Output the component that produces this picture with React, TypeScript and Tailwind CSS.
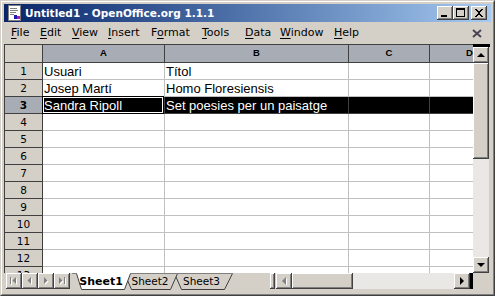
import React from "react";

const raised =
  "shadow-[inset_-1px_-1px_0_#404040,inset_1px_1px_0_#ffffff,inset_-2px_-2px_0_#808080]";

type Dir = "up" | "down" | "left" | "right";

function Tri({ dir, color = "#000000", shadow = false }: { dir: Dir; color?: string; shadow?: boolean }) {
  const pts: Record<Dir, string> = {
    up: "4,2 0,6 8,6",
    down: "0,2 8,2 4,6",
    left: "6,0 6,8 2,4",
    right: "2,0 2,8 6,4",
  };
  return (
    <svg width="8" height="8" viewBox="0 0 8 8" className="block">
      {shadow && <polygon points={pts[dir]} fill="#ffffff" transform="translate(1,1)" />}
      <polygon points={pts[dir]} fill={color} />
    </svg>
  );
}

function ScrollBtn({ dir, disabled = false }: { dir: Dir; disabled?: boolean }) {
  return (
    <div className={`w-[16px] h-[16px] shrink-0 bg-[#d4d0c8] ${raised} flex items-center justify-center`}>
      <Tri dir={dir} color={disabled ? "#808080" : "#000000"} shadow={disabled} />
    </div>
  );
}

function NavGlyph({ kind, fill }: { kind: "first" | "prev" | "next" | "last"; fill: string }) {
  return (
    <g fill={fill}>
      {kind === "first" && (
        <>
          <rect x="1" y="1" width="1" height="7" />
          <polygon points="7,1 7,8 3.5,4.5" />
        </>
      )}
      {kind === "prev" && <polygon points="6,1 6,8 2.5,4.5" />}
      {kind === "next" && <polygon points="3,1 3,8 6.5,4.5" />}
      {kind === "last" && (
        <>
          <polygon points="2,1 2,8 5.5,4.5" />
          <rect x="7" y="1" width="1" height="7" />
        </>
      )}
    </g>
  );
}

function NavBtn({ kind }: { kind: "first" | "prev" | "next" | "last" }) {
  return (
    <div className={`w-[16px] h-[16px] shrink-0 bg-[#d4d0c8] ${raised} flex items-center justify-center`}>
      <svg width="10" height="10" viewBox="0 0 10 10" className="block">
        <g transform="translate(1,1)">
          <NavGlyph kind={kind} fill="#ffffff" />
        </g>
        <NavGlyph kind={kind} fill="#808080" />
      </svg>
    </div>
  );
}

function TitleBtn({ kind }: { kind: "min" | "max" | "close" }) {
  return (
    <div className={`w-[16px] h-[14px] shrink-0 bg-[#d4d0c8] ${raised} flex`}>
      <svg width="16" height="14" viewBox="0 0 16 14" className="block" shapeRendering="crispEdges">
        {kind === "min" && <rect x="4" y="9" width="6" height="2" fill="#000" />}
        {kind === "max" && (
          <>
            <rect x="3.5" y="2.5" width="8" height="8" fill="none" stroke="#000" />
            <rect x="3" y="2" width="9" height="2" fill="#000" />
          </>
        )}
        {kind === "close" && (
          <g fill="#000">
            <polygon points="4,3 6,3 8,5.5 10,3 12,3 9,7 12,11 10,11 8,8.5 6,11 4,11 7,7" />
          </g>
        )}
      </svg>
    </div>
  );
}

const menus: { pre: string; u: string; post: string; w: string }[] = [
  { pre: "", u: "F", post: "ile", w: "w-[29px]" },
  { pre: "", u: "E", post: "dit", w: "w-[32px]" },
  { pre: "", u: "V", post: "iew", w: "w-[36px]" },
  { pre: "", u: "I", post: "nsert", w: "w-[43px]" },
  { pre: "F", u: "o", post: "rmat", w: "w-[51px]" },
  { pre: "", u: "T", post: "ools", w: "w-[43px]" },
  { pre: "", u: "D", post: "ata", w: "w-[35px]" },
  { pre: "", u: "W", post: "indow", w: "w-[54px]" },
  { pre: "", u: "H", post: "elp", w: "w-[30px]" },
];

const cols = [
  { l: "A", w: "w-[122px]" },
  { l: "B", w: "w-[184px]" },
  { l: "C", w: "w-[81px]" },
  { l: "D", w: "w-[80px]" },
];

const data: Record<number, string[]> = {
  1: ["Usuari", "Títol"],
  2: ["Josep Martí", "Homo Floresiensis"],
  3: ["Sandra Ripoll", "Set poesies per un paisatge"],
};

function Row({ n }: { n: number }) {
  const sel = n === 3;
  const vals = data[n] || [];
  return (
    <div className="flex h-[17px] shrink-0">
      <div
        className={`w-[38px] shrink-0 border-r border-b border-[#404040] flex items-center justify-center text-[10.5px] leading-none text-black ${
          sel ? "bg-[#a8acb4] font-bold" : "bg-[#d4d0c8]"
        }`}
      >
        {n}
      </div>
      {cols.map((c, i) => (
        <div
          key={c.l}
          className={`${c.w} shrink-0 relative border-r border-b pl-[1px] whitespace-nowrap text-[13px] leading-[18px] font-['Liberation_Sans',Arial,sans-serif] ${
            sel ? "bg-black text-white border-[#3f3f3f]" : "bg-white text-black border-[#c0c0c0]"
          }`}
        >
          {vals[i] || ""}
          {sel && i === 0 && (
            <div className="absolute left-[-1px] right-0 top-[-1px] bottom-[-1px] border border-black z-10">
              <div className="absolute inset-0 border border-white" />
            </div>
          )}
        </div>
      ))}
      <div className="flex-1 bg-white border-b border-[#c0c0c0]" />
    </div>
  );
}

function Tabs() {
  return (
    <div className="relative w-[161px] h-[17px] shrink-0 ml-[2px]">
      <svg width="161" height="17" viewBox="0 0 161 17" className="absolute inset-0 block">
        <polygon points="102.5,0.5 109.5,16.5 152.5,16.5 160.5,0.5" fill="#d4d0c8" stroke="#404040" />
        <polygon points="52.5,0.5 59.5,16.5 98.5,16.5 105.5,0.5" fill="#d4d0c8" stroke="#404040" />
        <polygon points="4.5,0.5 9.5,16.5 52.5,16.5 58.5,0.5" fill="#ffffff" stroke="#404040" />
        <line x1="0" y1="0.5" x2="161" y2="0.5" stroke="#808080" />
        <line x1="5" y1="0.5" x2="58" y2="0.5" stroke="#ffffff" />
      </svg>
      <div className="relative flex h-[17px] items-center text-black font-['DejaVu_Sans',sans-serif]">
        <div className="w-[58px] text-center text-[11px] font-bold leading-[17px]">Sheet1</div>
        <div className="w-[40px] text-center text-[10.5px] leading-[17px]">Sheet2</div>
        <div className="w-[63px] text-center text-[10.5px] leading-[17px]">Sheet3</div>
      </div>
    </div>
  );
}

export default function App() {
  return (
    <div className="w-[495px] h-[296px] overflow-hidden bg-[#d4d0c8] border border-t-[#d4d0c8] border-l-[#d4d0c8] border-r-[#404040] border-b-[#404040] font-['DejaVu_Sans',sans-serif]">
      <div className="w-full h-full border border-t-white border-l-white border-r-[#808080] border-b-[#808080] p-[2px] flex flex-col">
        {/* Title bar */}
        <div className="h-[18px] shrink-0 flex items-center bg-gradient-to-r from-[#0a246a] to-[#a6caf0]">
          <svg width="16" height="16" viewBox="0 0 16 16" className="block ml-[3px] shrink-0" shapeRendering="crispEdges">
            <rect x="1.5" y="0.5" width="12" height="15" fill="#ffffff" stroke="#808080" />
            <rect x="3" y="3" width="7" height="1" fill="#808080" />
            <rect x="3" y="5" width="8" height="1" fill="#808080" />
            <rect x="3" y="7" width="6" height="1" fill="#808080" />
            <rect x="3" y="9" width="4" height="1" fill="#808080" />
            <rect x="7" y="10" width="3" height="4" fill="#1c1cb4" />
            <rect x="10" y="11" width="3" height="3" fill="#b01cb0" />
          </svg>
          <div className="ml-[2px] text-white font-bold text-[10.5px] leading-none whitespace-nowrap">
            Untitled1 - OpenOffice.org 1.1.1
          </div>
          <div className="flex-1" />
          <TitleBtn kind="min" />
          <TitleBtn kind="max" />
          <div className="w-[2px]" />
          <TitleBtn kind="close" />
          <div className="w-[4px]" />
        </div>

        {/* Menu bar */}
        <div className="h-[22px] shrink-0 flex items-center pl-[7px] text-[11px] text-black">
          {menus.map((m) => (
            <div key={m.u + m.post} className={`${m.w} shrink-0 whitespace-nowrap`}>
              {m.pre}
              <span className="underline underline-offset-[2px]">{m.u}</span>
              {m.post}
            </div>
          ))}
          <div className="flex-1" />
          <svg width="10" height="9" viewBox="0 0 10 9" className="block mr-[9px] mt-[1px]">
            <path d="M1 1 L9 8 M9 1 L1 8" stroke="#4c4454" strokeWidth="2" />
          </svg>
        </div>

        {/* Document area */}
        <div className="h-[229px] shrink-0 flex">
          <div className="flex-1 min-w-0 overflow-hidden border-l border-t border-[#404040] bg-white flex flex-col">
            <div className="flex h-[18px] shrink-0 border-b border-[#404040]">
              <div className="w-[38px] shrink-0 bg-[#d4d0c8] border-r border-[#404040]" />
              {cols.map((c) => (
                <div
                  key={c.l}
                  className={`${c.w} shrink-0 bg-[#a8acb4] border-r border-[#404040] flex items-center justify-center text-[9.5px] font-bold font-['Liberation_Sans',Arial,sans-serif] text-black`}
                >
                  {c.l}
                </div>
              ))}
              <div className="flex-1 bg-[#a8acb4]" />
            </div>
            {Array.from({ length: 13 }, (_, i) => (
              <Row key={i + 1} n={i + 1} />
            ))}
          </div>
          <div className="w-[18px] shrink-0 flex flex-col">
            <div className="h-[3px] w-[17px] bg-black shrink-0" />
            <ScrollBtn dir="up" />
            <div className="flex-1 w-[16px] bg-[#eae8e4] flex flex-col">
              <div className={`h-[96px] bg-[#d4d0c8] ${raised}`} />
            </div>
            <ScrollBtn dir="down" />
          </div>
        </div>

        {/* Bottom strip: sheet tabs + horizontal scrollbar */}
        <div className="h-[17px] shrink-0 flex items-start">
          <div className="pl-[2px] flex shrink-0">
            <NavBtn kind="first" />
            <NavBtn kind="prev" />
            <NavBtn kind="next" />
            <NavBtn kind="last" />
          </div>
          <Tabs />
          <div className="flex-1" />
          <div className={`w-[5px] h-[16px] shrink-0 bg-[#d4d0c8] ${raised}`} />
          <div className="w-[1px]" />
          <ScrollBtn dir="left" disabled />
          <div className={`w-[61px] h-[16px] shrink-0 bg-[#d4d0c8] ${raised}`} />
          <div className="w-[101px] h-[16px] shrink-0 bg-[#eae8e4]" />
          <ScrollBtn dir="right" />
          <div className="w-[3px] h-[16px] shrink-0 bg-black" />
          <div className="w-[18px] shrink-0" />
        </div>
      </div>
    </div>
  );
}
